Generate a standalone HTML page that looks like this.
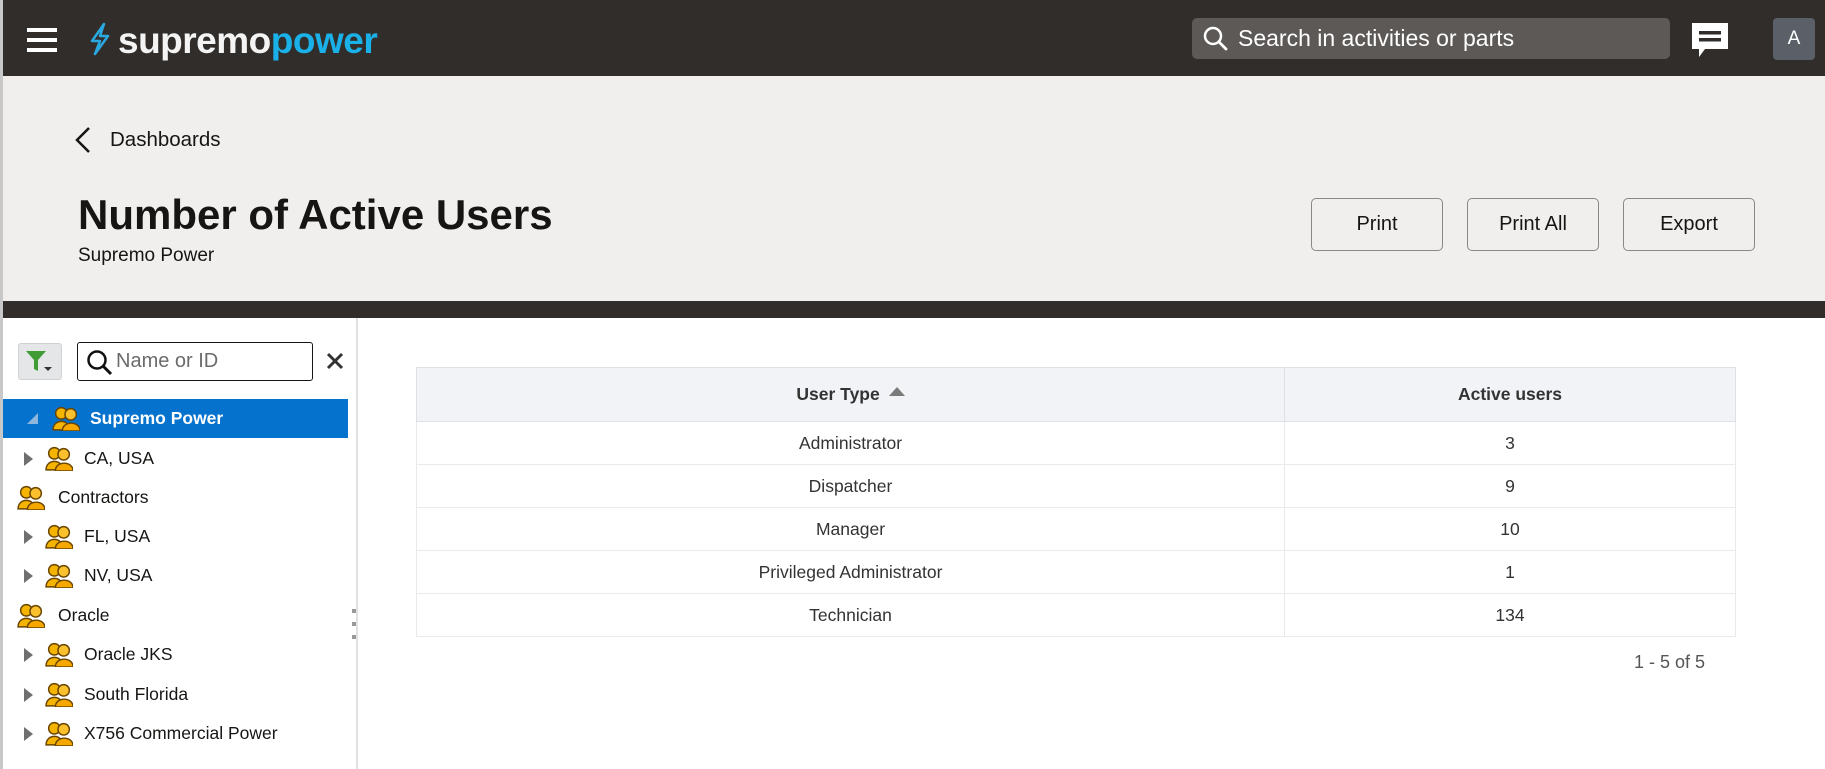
<!DOCTYPE html>
<html><head><meta charset="utf-8"><style>
*{margin:0;padding:0;box-sizing:border-box}
body{width:1825px;height:769px;overflow:hidden;background:#fff;font-family:"Liberation Sans",sans-serif;color:#161513;position:relative}
.abs{position:absolute}
#hdr{left:0;top:0;width:1825px;height:76px;background:#312d2a}
#leftstrip{left:0;top:0;width:3px;height:769px;background:#c8c8c8;z-index:5}
#band{left:0;top:76px;width:1825px;height:225px;background:#f0efed}
#dark{left:0;top:301px;width:1825px;height:17px;background:#312d2a}
.btn{top:198px;width:132px;height:53px;border:1px solid #8a8886;border-radius:5px;background:#f0efed;font-size:20px;display:flex;align-items:center;justify-content:center;color:#161513}
.row{left:3px;width:345px;height:39px;display:flex;align-items:center;font-size:17.5px;color:#161513}
.tri{width:0;height:0;border-top:7px solid transparent;border-bottom:7px solid transparent;border-left:9px solid #6f6f6f;margin-left:21px;margin-right:12px}
.ppl{width:28px;height:25px;margin-right:11px}
table{border-collapse:collapse;position:absolute;left:416px;top:367px;width:1320px;font-size:17.5px;color:#333}
th{background:#f1f3f6;height:54px;font-weight:bold;border:1px solid #dde1e6}
td{height:43px;text-align:center;border:1px solid #e8eaed}
</style></head><body>
<div id="leftstrip" class="abs"></div>
<div id="hdr" class="abs">
  <div class="abs" style="left:27px;top:28px;width:30px;height:4px;background:#fff"></div>
  <div class="abs" style="left:27px;top:38px;width:30px;height:4px;background:#fff"></div>
  <div class="abs" style="left:27px;top:48px;width:30px;height:4px;background:#fff"></div>
  <svg class="abs" style="left:88px;top:22px" width="24" height="34" viewBox="0 0 24 34"><path d="M16 2 L4 19 L12 19 L7 32 L20 14 L12 14 Z" fill="none" stroke="#2aa9e0" stroke-width="2.5" stroke-linejoin="round"/></svg>
  <div class="abs" style="left:118px;top:19px;font-size:37px;font-weight:bold;letter-spacing:-0.5px;line-height:44px"><span style="color:#f4f4f4">supremo</span><span style="color:#1ab0e8">power</span></div>
  <div class="abs" style="left:1192px;top:18px;width:478px;height:41px;background:#5d5957;border-radius:5px"></div>
  <svg class="abs" style="left:1202px;top:25px" width="28" height="28" viewBox="0 0 28 28"><circle cx="11" cy="11" r="8" fill="none" stroke="#fff" stroke-width="2.5"/><path d="M17 17 L24 24" stroke="#fff" stroke-width="2.8" stroke-linecap="round"/></svg>
  <div class="abs" style="left:1238px;top:24px;font-size:23px;color:#fff;line-height:28px">Search in activities or parts</div>
  <svg class="abs" style="left:1691px;top:22px" width="38" height="36" viewBox="0 0 38 36"><path d="M1 1 H37 V27 H14 L8 35 V27 H1 Z" fill="#fff"/><rect x="8" y="9" width="22" height="3.5" fill="#312d2a"/><rect x="8" y="16" width="22" height="3.5" fill="#312d2a"/></svg>
  <div class="abs" style="left:1773px;top:18px;width:42px;height:42px;background:#5b6068;border-radius:4px;color:#fff;font-size:19px;display:flex;align-items:center;justify-content:center">A</div>
</div>
<div id="band" class="abs">
  <svg class="abs" style="left:74px;top:50px" width="18" height="28" viewBox="0 0 18 28"><path d="M15 2 L3 14 L15 26" fill="none" stroke="#161513" stroke-width="2.5"/></svg>
  <div class="abs" style="left:110px;top:52px;font-size:20.5px;line-height:24px">Dashboards</div>
  <div class="abs" style="left:78px;top:114px;font-size:42px;font-weight:bold;line-height:50px">Number of Active Users</div>
  <div class="abs" style="left:78px;top:168px;font-size:19px;line-height:24px">Supremo Power</div>
</div>
<div class="btn abs" style="left:1311px">Print</div>
<div class="btn abs" style="left:1467px">Print All</div>
<div class="btn abs" style="left:1623px">Export</div>
<div id="dark" class="abs"></div>
<div class="abs" style="left:356px;top:318px;width:2px;height:451px;background:#e0e0e0"></div>
<div class="abs" style="left:352px;top:609px;width:4px;height:4px;background:#999"></div>
<div class="abs" style="left:352px;top:622px;width:4px;height:4px;background:#999"></div>
<div class="abs" style="left:352px;top:635px;width:4px;height:4px;background:#999"></div>
<div class="abs" style="left:18px;top:343px;width:44px;height:37px;background:#e4e6e8;border:1px solid #cfd2d5;border-radius:3px"></div>
<svg class="abs" style="left:24px;top:349px" width="32" height="26" viewBox="0 0 32 26"><path d="M2 2 H22 L14 11 V22 L10 20 V11 Z" fill="#3f9c35"/><path d="M20 18 H28 L24 22 Z" fill="#333"/></svg>
<div class="abs" style="left:77px;top:342px;width:236px;height:39px;border:1px solid #161513;border-radius:3px;background:#fff"></div>
<svg class="abs" style="left:86px;top:349px" width="28" height="28" viewBox="0 0 28 28"><circle cx="11" cy="11" r="8.5" fill="none" stroke="#111" stroke-width="2.5"/><path d="M17 17 L25 25" stroke="#111" stroke-width="3"/></svg>
<div class="abs" style="left:116px;top:348px;font-size:20px;color:#6b6b6b;line-height:26px">Name or ID</div>
<svg class="abs" style="left:326px;top:352px" width="18" height="18" viewBox="0 0 18 18"><path d="M2 2 L16 16 M16 2 L2 16" stroke="#333" stroke-width="3"/></svg>
<svg width="0" height="0" style="position:absolute"><defs><g id="pp"><circle cx="9" cy="7" r="5.5" fill="#f5b400" stroke="#6a4500" stroke-width="1.4"/><path d="M1 23 C1 12 17 12 17 23 Z" fill="#f5b400" stroke="#6a4500" stroke-width="1.4"/><circle cx="18" cy="8" r="5.5" fill="#fbc02d" stroke="#6a4500" stroke-width="1.4"/><path d="M10 24 C10 14 27 14 27 24 Z" fill="#f6a800" stroke="#6a4500" stroke-width="1.4"/></g></defs></svg>
<div class="row abs" style="top:399px;background:#0572ce;color:#fff;font-weight:bold"><div style="width:0;height:0;border-left:11px solid transparent;border-bottom:11px solid #8eb6dc;margin-left:24px;margin-right:14px"></div><svg class="ppl" style="margin-right:10px" viewBox="0 0 27 24"><use href="#pp"/></svg>Supremo Power</div>
<div class="row abs" style="top:439px"><div class="tri"></div><svg class="ppl" viewBox="0 0 27 24"><use href="#pp"/></svg>CA, USA</div>
<div class="row abs" style="top:478px"><svg class="ppl" style="margin-left:14px;margin-right:13px" viewBox="0 0 27 24"><use href="#pp"/></svg>Contractors</div>
<div class="row abs" style="top:517px"><div class="tri"></div><svg class="ppl" viewBox="0 0 27 24"><use href="#pp"/></svg>FL, USA</div>
<div class="row abs" style="top:556px"><div class="tri"></div><svg class="ppl" viewBox="0 0 27 24"><use href="#pp"/></svg>NV, USA</div>
<div class="row abs" style="top:596px"><svg class="ppl" style="margin-left:14px;margin-right:13px" viewBox="0 0 27 24"><use href="#pp"/></svg>Oracle</div>
<div class="row abs" style="top:635px"><div class="tri"></div><svg class="ppl" viewBox="0 0 27 24"><use href="#pp"/></svg>Oracle JKS</div>
<div class="row abs" style="top:675px"><div class="tri"></div><svg class="ppl" viewBox="0 0 27 24"><use href="#pp"/></svg>South Florida</div>
<div class="row abs" style="top:714px"><div class="tri"></div><svg class="ppl" viewBox="0 0 27 24"><use href="#pp"/></svg>X756 Commercial Power</div>
<table>
<tr><th style="width:868px">User Type <span style="display:inline-block;width:0;height:0;border-left:8px solid transparent;border-right:8px solid transparent;border-bottom:9px solid #7a7a7a;vertical-align:4px;margin-left:4px"></span></th><th>Active users</th></tr>
<tr><td>Administrator</td><td>3</td></tr>
<tr><td>Dispatcher</td><td>9</td></tr>
<tr><td>Manager</td><td>10</td></tr>
<tr><td>Privileged Administrator</td><td>1</td></tr>
<tr><td>Technician</td><td>134</td></tr>
</table>
<div class="abs" style="left:1634px;top:652px;font-size:18px;color:#555">1 - 5 of 5</div>
</body></html>
